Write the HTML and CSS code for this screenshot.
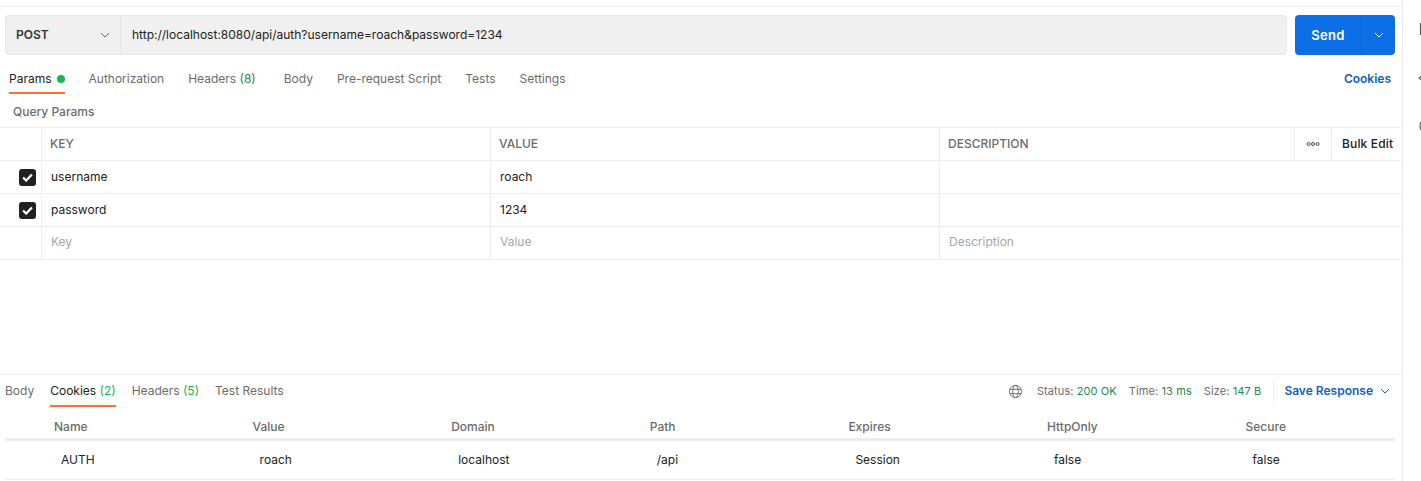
FILE: index.html
```html
<!DOCTYPE html>
<html lang="en">
<head>
<meta charset="utf-8">
<title>POST request</title>
<link rel="stylesheet" href="styles.css">
</head>
<body>
<div class="app">
  <main class="main">
    <div class="request">
      <div class="bar">
        <div class="method"><span>POST</span><svg class="chev" viewBox="0 0 10 6"><path d="M1 1l4 4 4-4"/></svg></div>
        <div class="url">http://localhost:8080/api/auth?username=roach&amp;password=1234</div>
      </div>
      <div class="send"><span class="send-label">Send</span><span class="send-more"><svg class="chev white" viewBox="0 0 10 6"><path d="M1 1l4 4 4-4"/></svg></span></div>
    </div>
    <nav class="tabs req-tabs">
      <span class="tab active">Params<i class="dot"></i></span>
      <span class="tab">Authorization</span>
      <span class="tab wide">Headers <em>(8)</em></span>
      <span class="tab">Body</span>
      <span class="tab">Pre-request Script</span>
      <span class="tab">Tests</span>
      <span class="tab">Settings</span>
      <a class="link cookies">Cookies</a>
    </nav>
    <div class="qp">Query Params</div>
    <div class="grid">
      <div class="row head">
        <div class="c chk"></div><div class="c k">KEY</div><div class="c v">VALUE</div><div class="c d">DESCRIPTION</div>
        <div class="c dots"><svg viewBox="0 0 14 4"><circle cx="2.5" cy="2" r="1.5"/><circle cx="7" cy="2" r="1.5"/><circle cx="11.5" cy="2" r="1.5"/></svg></div>
        <div class="c bulk">Bulk Edit</div>
      </div>
      <div class="row">
        <div class="c chk"><span class="box"><svg viewBox="0 0 10 8"><path d="M1 4l2.8 2.8L9 1.2"/></svg></span></div>
        <div class="c k">username</div><div class="c v">roach</div><div class="c d"></div>
      </div>
      <div class="row">
        <div class="c chk"><span class="box"><svg viewBox="0 0 10 8"><path d="M1 4l2.8 2.8L9 1.2"/></svg></span></div>
        <div class="c k">password</div><div class="c v">1234</div><div class="c d"></div>
      </div>
      <div class="row ph">
        <div class="c chk"></div><div class="c k">Key</div><div class="c v">Value</div><div class="c d">Description</div>
      </div>
    </div>
    <section class="response">
      <div class="res-bar">
        <nav class="tabs res-tabs">
          <span class="tab">Body</span>
          <span class="tab active">Cookies <em>(2)</em></span>
          <span class="tab">Headers <em>(5)</em></span>
          <span class="tab">Test Results</span>
        </nav>
        <div class="meta">
          <svg class="globe" viewBox="0 0 16 16"><circle cx="8" cy="8" r="6.5"/><ellipse cx="8" cy="8" rx="3" ry="6.5"/><path d="M2 5.7h12M2 10.3h12"/></svg>
          <span class="stat">Status: <b>200 OK</b></span>
          <span class="stat">Time: <b>13 ms</b></span>
          <span class="stat">Size: <b>147 B</b></span>
          <span class="sep"></span>
          <a class="link save">Save Response</a>
          <svg class="chev blue" viewBox="0 0 10 6"><path d="M1 1l4 4 4-4"/></svg>
        </div>
      </div>
      <div class="cookie-table">
        <div class="ck-row ck-head"><span>Name</span><span>Value</span><span>Domain</span><span>Path</span><span>Expires</span><span>HttpOnly</span><span>Secure</span></div>
        <div class="ck-row ck-body"><span>AUTH</span><span>roach</span><span>localhost</span><span>/api</span><span>Session</span><span>false</span><span>false</span></div>
      </div>
    </section>
  </main>
  <aside class="side">
    <svg class="rail" viewBox="0 0 18 140"><path d="M17.5 23v12"/><path d="M18 76.5l-1.8 1.6L18 79.7"/><path d="M18 122q-1.8 4 0 8"/></svg>
  </aside>
</div>
</body>
</html>
```
FILE: styles.css
```css
* { box-sizing: border-box; }
html, body { margin: 0; height: 100%; }
body { background: #fff; color: #212121; font: 12px/16px Inter, "Noto Sans", sans-serif; overflow: hidden; }
.app { display: flex; height: 481px; }
.main { width: 1403px; height: 481px; border-right: 1px solid #ededed; display: flex; flex-direction: column; padding-top: 6px; }
.side { flex: 1; overflow: hidden; }
.rail { display: block; width: 18px; height: 140px; fill: none; stroke: #5a5a5a; stroke-width: 1.2; }

.request { display: flex; gap: 8px; border-top: 1px solid #ededed; padding: 8px 7px 0 5px; }
.bar { flex: 1; height: 40px; display: flex; background: #f0f0f0; border: 1px solid #e6e6e6; border-radius: 4px; }
.method { width: 115px; flex: none; display: flex; align-items: center; justify-content: space-between; padding: 0 10px; border-right: 1px solid #e6e6e6; font-weight: 600; color: #333; }
.url { padding-left: 11px; line-height: 38px; color: #212121; }
.chev { width: 10px; height: 6px; fill: none; stroke: #6b6b6b; stroke-width: 1; }
.chev.white { stroke: #fff; }
.chev.blue { stroke: #0d5fc9; }
.send { width: 100px; height: 40px; background: #0d6fe6; border-radius: 4px; display: flex; color: #fff; font-size: 13px; font-weight: 600; letter-spacing: .3px; }
.send-label { width: 67px; text-align: center; line-height: 40px; border-right: 1px solid #0c66d4; }
.send-more { flex: 1; display: flex; align-items: center; justify-content: center; }

.tabs { display: flex; color: #6b6b6b; }
.tab { position: relative; }
.tab em { font-style: normal; }
.tab.active { color: #212121; }
.tab.active::after { content: ""; position: absolute; left: 0; right: 0; height: 2px; background: #ff6c37; }
.req-tabs { height: 39px; padding: 16px 11px 0 9px; gap: 24px; }
.req-tabs .tab { height: 23px; }
.req-tabs .tab.wide { margin-right: 4px; }
.req-tabs .tab.active { display: flex; gap: 5px; align-items: flex-start; }
.req-tabs .tab.active::after { top: 21px; }
.req-tabs .tab em { color: #1f8a4c; }
.dot { width: 8px; height: 8px; margin-top: 4px; border-radius: 50%; background: #0cbb52; }
.link { color: #0d5fc9; font-weight: 600; }
.cookies { margin-left: auto; }

.qp { height: 33px; padding: 10px 0 0 13px; font-weight: 500; color: #6b6b6b; }
.grid { border-top: 1px solid #ededed; }
.row { display: flex; height: 33px; border-bottom: 1px solid #ededed; }
.c { border-right: 1px solid #ededed; padding: 8px 0 0 9px; }
.chk { width: 42px; flex: none; padding: 0 5px 0 0; display: flex; align-items: center; justify-content: flex-end; }
.k, .v { width: 449px; flex: none; }
.d { flex: 1; border-right: 0; }
.head { color: #6b6b6b; font-weight: 500; }
.head .k, .head .v, .head .d { padding-left: 8px; }
.dots { width: 38px; flex: none; border-left: 1px solid #ededed; padding: 0; display: flex; align-items: center; justify-content: center; }
.dots svg { width: 14px; height: 4px; fill: none; stroke: #333; stroke-width: .9; }
.bulk { width: 70px; flex: none; border-right: 0; padding-left: 10px; color: #212121; font-weight: 500; letter-spacing: .15px; white-space: nowrap; }
.box { width: 17px; height: 17px; border-radius: 3px; background: #212121; display: flex; align-items: center; justify-content: center; }
.box svg { width: 11px; height: 9px; fill: none; stroke: #fff; stroke-width: 2; }
.ph { color: #a6a6a6; }
.ph .c { padding-top: 7px; }
.ph .chk { padding-top: 0; }

.response { margin-top: auto; border-top: 1px solid #ededed; height: 107px; padding: 0 7px 0 5px; }
.res-bar { display: flex; justify-content: space-between; height: 32px; }
.res-tabs { gap: 16px; padding-top: 8px; }
.res-tabs .tab.active::after { top: 22px; }
.res-tabs .tab em { color: #0cbb52; }
.meta { display: flex; align-items: center; font-size: 11px; letter-spacing: .1px; color: #6b6b6b; height: 32px; padding-right: 5px; }
.globe { width: 15px; height: 15px; fill: none; stroke: #6b6b6b; stroke-width: 1; margin-right: 14px; }
.stat { margin-right: 12px; }
.stat b { font-weight: 400; color: #1f8a4c; }
.sep { width: 1px; height: 20px; background: #ededed; margin: 0 10px 0 0; }
.save { font-size: 12px; letter-spacing: 0; margin-right: 7px; }

.cookie-table { display: flex; flex-direction: column; }
.ck-row { display: grid; grid-template-columns: repeat(7, 198.6px); }
.ck-head { height: 34px; padding: 12px 0 0 49px; border-bottom: 3px solid #ededed; color: #6b6b6b; font-weight: 500; }
.ck-body { height: 39px; padding: 11px 0 0 56px; border-bottom: 1px solid #ededed; }
```
